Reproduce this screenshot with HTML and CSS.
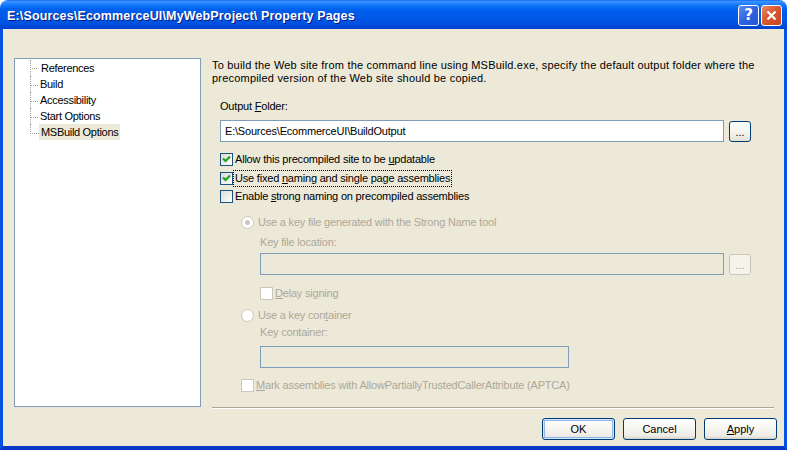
FILE: index.html
```html
<!DOCTYPE html>
<html lang="en">
<head>
    <meta charset="UTF-8">
    <title>Property Pages</title>
    <link rel="stylesheet" href="styles.css">
</head>
<body>
    <div class="window">
        <div class="titlebar">
            <span class="title">E:\Sources\EcommerceUI\MyWebProject\ Property Pages</span>
            <div class="caption-buttons">
                <div class="cap-btn help">?</div>
                <div class="cap-btn close">
                    <svg width="11" height="11" viewBox="0 0 11 11"><path d="M1.5 1.5 L9.5 9.5 M9.5 1.5 L1.5 9.5" stroke="#fff" stroke-width="2.2"/></svg>
                </div>
            </div>
        </div>

        <div class="client">
            <div class="main">
                <!-- page list on the left -->
                <div class="tree">
                    <ul>
                        <li><span>References</span></li>
                        <li><span>Build</span></li>
                        <li><span>Accessibility</span></li>
                        <li><span>Start Options</span></li>
                        <li class="selected"><span>MSBuild Options</span></li>
                    </ul>
                </div>

                <div class="panel">
                    <p class="desc">To build the Web site from the command line using MSBuild.exe, specify the default output folder where the<br>precompiled version of the Web site should be copied.</p>

                    <div class="label">Output <u>F</u>older:</div>
                    <div class="path-row">
                        <div class="textbox output">E:\Sources\EcommerceUI\BuildOutput</div>
                        <div class="browse">...</div>
                    </div>

                    <div class="check row-updatable">
                        <span class="box checked"><svg width="11" height="11" viewBox="0 0 11 11"><path d="M2 4.5 L4.5 7 L9 2.5" fill="none" stroke="#21a121" stroke-width="2.2"/></svg></span>
                        <span class="text">Allow this precompiled site to be <u>u</u>pdatable</span>
                    </div>
                    <div class="check row-fixed">
                        <span class="box checked"><svg width="11" height="11" viewBox="0 0 11 11"><path d="M2 4.5 L4.5 7 L9 2.5" fill="none" stroke="#21a121" stroke-width="2.2"/></svg></span>
                        <span class="text focused">Use fixed <u>n</u>aming and single page assemblies</span>
                    </div>
                    <div class="check row-strong">
                        <span class="box"></span>
                        <span class="text">Enable <u>s</u>trong naming on precompiled assemblies</span>
                    </div>

                    <!-- strong naming options, disabled -->
                    <div class="check disabled radio-row row-keyfile">
                        <span class="radio on"></span>
                        <span class="text">Use a key file generated with the Strong Name tool</span>
                    </div>
                    <div class="label disabled sub row-keylabel">Key file location:</div>
                    <div class="path-row sub row-keyinput">
                        <div class="textbox off keyfile"></div>
                        <div class="browse off">...</div>
                    </div>
                    <div class="check disabled sub row-delay">
                        <span class="box"></span>
                        <span class="text"><u>D</u>elay signing</span>
                    </div>
                    <div class="check disabled radio-row row-container">
                        <span class="radio"></span>
                        <span class="text">Use a key con<u>t</u>ainer</span>
                    </div>
                    <div class="label disabled sub row-containerlabel">Key container:</div>
                    <div class="path-row sub row-containerinput">
                        <div class="textbox off container"></div>
                    </div>
                    <div class="check disabled radio-row row-aptca">
                        <span class="box"></span>
                        <span class="text"><u>M</u>ark assemblies with AllowPartiallyTrustedCallerAttribute (APTCA)</span>
                    </div>
                </div>
            </div>

            <div class="footer">
                <button class="btn default">OK</button>
                <button class="btn">Cancel</button>
                <button class="btn"><u>A</u>pply</button>
            </div>
        </div>
    </div>
</body>
</html>
```

FILE: styles.css
```css
* {
    box-sizing: border-box;
    margin: 0;
    padding: 0;
}

body {
    background: #fff;
    width: 787px;
    height: 450px;
    overflow: hidden;
    font-family: 'Liberation Sans', Arial, sans-serif;
    font-size: 11px;
    letter-spacing: -0.2px;
    color: #000;
}

.window {
    width: 787px;
    height: 450px;
    display: flex;
    flex-direction: column;
    border-radius: 8px 8px 0 0;
    overflow: hidden;
}

/* title bar */
.titlebar {
    height: 29px;
    display: flex;
    align-items: center;
    justify-content: space-between;
    padding: 0 5px 0 7px;
    background: linear-gradient(to bottom, #0058ee 0, #3d95ff 1px, #2a88ff 3px, #0b72fa 6px, #0062ef 9px, #005cea 12px, #0058e6 19px, #0052e0 23px, #004ad8 26px, #0040cc 29px);
}

.title {
    color: #fff;
    font-weight: bold;
    font-size: 12.5px;
    letter-spacing: 0.15px;
    padding-top: 2px;
    text-shadow: 1px 1px 0 #0a1883;
    white-space: pre;
}

.caption-buttons {
    display: flex;
    gap: 2px;
    padding-top: 2px;
}

.cap-btn {
    width: 21px;
    height: 21px;
    border: 1px solid #fff;
    border-radius: 3px;
    display: flex;
    align-items: center;
    justify-content: center;
}

.cap-btn.help {
    background: linear-gradient(135deg, #5f8ef5 0%, #2f63e0 50%, #2255d6 100%);
    color: #fff;
    font-family: 'DejaVu Sans', sans-serif;
    font-weight: bold;
    font-size: 15px;
    letter-spacing: 0;
    line-height: 1;
}

.cap-btn.close {
    background: linear-gradient(135deg, #e98a6e 0%, #d9582f 45%, #c7441c 100%);
}

/* client area */
.client {
    flex: 1;
    background: #ece9d8;
    border-left: 3px solid #0452e4;
    border-right: 3px solid #0452e4;
    border-bottom: 4px solid #0838c8;
    padding: 29px 0 6px 11px;
    display: flex;
    flex-direction: column;
}

.main {
    display: flex;
    height: 350px;
    margin-right: 10px;
}

/* tree */
.tree {
    width: 187px;
    height: 349px;
    background: #fff;
    border: 1px solid #7f9db9;
    padding-top: 1px;
}

.tree ul {
    list-style: none;
}

.tree li {
    display: flex;
    height: 16px;
    margin-left: 15px;
    border-left: 1px dotted #a0a0a0;
}

.tree li::before {
    content: '';
    width: 7px;
    height: 9px;
    border-bottom: 1px dotted #a0a0a0;
}

.tree li:first-child {
    border-left: none;
}

.tree li:first-child::before {
    width: 8px;
    height: 16px;
    border-left: 1px dotted #a0a0a0;
    border-bottom: none;
    background: linear-gradient(to right, transparent 1px, #a0a0a0 1px, #a0a0a0 2px, transparent 2px, transparent 3px, #a0a0a0 3px, #a0a0a0 4px, transparent 4px, transparent 5px, #a0a0a0 5px, #a0a0a0 6px, transparent 6px) 0 8px / 8px 1px no-repeat;
}

.tree li:last-child {
    border-left: none;
}

.tree li:last-child::before {
    width: 8px;
    border-left: 1px dotted #a0a0a0;
}

.tree li span {
    line-height: 16px;
    padding: 0 2px;
    letter-spacing: -0.3px;
}

.tree li.selected span {
    background: #ece9d8;
}

/* right side */
.panel {
    flex: 1;
    margin-left: 11px;
    border-bottom: 1px solid #aca899;
    box-shadow: 0 1px 0 #fff;
}

.desc {
    margin-top: 1px;
    line-height: 13px;
    letter-spacing: 0.2px;
}

.label {
    margin-top: 15px;
    padding-left: 8px;
    line-height: 13px;
}

.path-row {
    display: flex;
    align-items: center;
    gap: 5px;
    margin-top: 7px;
    padding-left: 8px;
}

.textbox {
    height: 22px;
    border: 1px solid #7f9db9;
    background: #fff;
    padding: 0 4px;
    line-height: 20px;
    white-space: nowrap;
}

.textbox.output {
    width: 504px;
}

.textbox.off {
    background: #ece9d8;
}

.textbox.keyfile {
    width: 464px;
}

.textbox.container {
    width: 309px;
}

.browse {
    width: 22px;
    height: 21px;
    border: 1px solid #003c74;
    border-radius: 3px;
    background: linear-gradient(to bottom, #fff 0%, #f3f2ec 60%, #e3e0d4 100%);
    text-align: center;
    line-height: 21px;
    letter-spacing: 0;
}

.browse.off {
    border-color: #c9c7ba;
    background: #f5f4ea;
    color: #aca899;
}

/* checkboxes and radios */
.check {
    display: flex;
    align-items: center;
    height: 13px;
    gap: 1px;
    padding-left: 8px;
}

.check .text {
    line-height: 13px;
    padding: 1px;
}

.check .text.focused {
    outline: 1px dotted #000;
}

.box {
    width: 13px;
    height: 13px;
    border: 1px solid #1c5180;
    background: linear-gradient(135deg, #dcdcd7 0%, #f0f0ec 60%, #fff 100%);
    display: flex;
    align-items: center;
    justify-content: center;
}

.radio {
    width: 13px;
    height: 13px;
    border: 1px solid #cac8bb;
    border-radius: 50%;
    background: #fff;
    display: flex;
    align-items: center;
    justify-content: center;
    margin-right: 2px;
}

.radio.on::after {
    content: '';
    width: 5px;
    height: 5px;
    border-radius: 50%;
    background: #cac8bb;
}

.disabled {
    color: #aca899;
}

.disabled .box {
    border-color: #cac8bb;
    background: #fff;
}

.radio-row {
    padding-left: 29px;
}

.sub {
    padding-left: 48px;
}

.row-updatable { margin-top: 11px; }
.row-fixed { margin-top: 6px; }
.row-strong { margin-top: 5px; }
.row-keyfile { margin-top: 13px; }
.row-keylabel { margin-top: 7px; }
.row-keyinput { margin-top: 4px; }
.row-delay { margin-top: 12px; }
.row-container { margin-top: 9px; }
.row-containerlabel { margin-top: 4px; }
.row-containerinput { margin-top: 7px; }
.row-aptca { margin-top: 11px; }

/* dialog buttons */
.footer {
    display: flex;
    justify-content: flex-end;
    gap: 8px;
    margin-top: 10px;
    padding-right: 7px;
}

.btn {
    width: 73px;
    height: 22px;
    border: 1px solid #003c74;
    border-radius: 3px;
    background: linear-gradient(to bottom, #fff 0%, #f7f6f1 45%, #ecebe5 85%, #d6d0c5 100%);
    font-family: 'Liberation Sans', Arial, sans-serif;
    font-size: 11px;
    color: #000;
}

.btn.default {
    box-shadow: inset 0 0 0 1px #cee7ff, inset 0 0 0 2px #95b4ea;
}
```
